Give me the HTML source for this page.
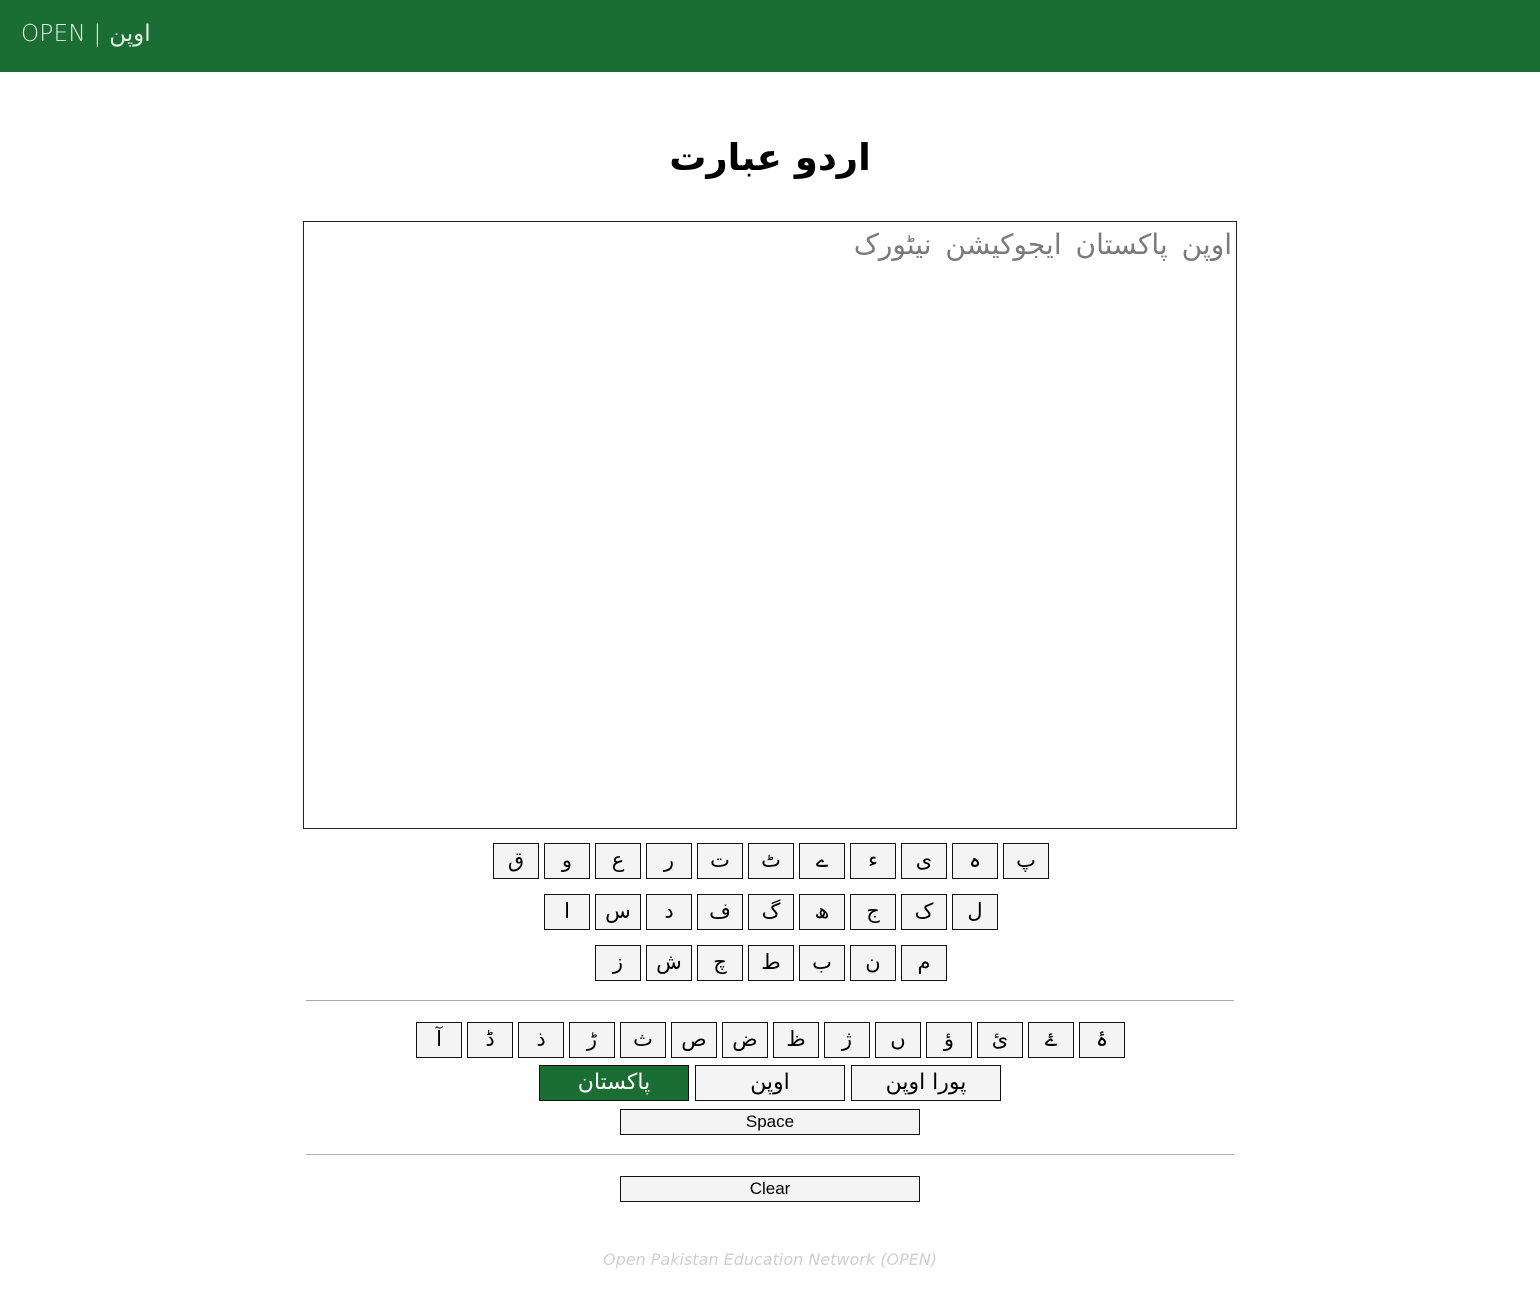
<!DOCTYPE html>
<html><head><meta charset="utf-8">
<style>
*{box-sizing:border-box;margin:0;padding:0}
body{width:1540px;height:1293px;background:#fff;font-family:"Liberation Sans","DejaVu Sans",sans-serif;position:relative;overflow:hidden}
.nav{position:absolute;left:0;top:0;width:1540px;height:72px;background:#1b6e33}
.brand{position:absolute;left:21px;top:21px;color:#e8efe8;font-size:23px;font-family:"DejaVu Sans","Liberation Sans",sans-serif;font-weight:300;letter-spacing:0.3px}
h1{position:absolute;left:0;width:1540px;top:136px;text-align:center;font-size:37px;font-weight:bold;font-family:"DejaVu Sans","Liberation Sans",sans-serif}
.ta{position:absolute;left:303px;top:221px;width:934px;height:608px;border:1px solid #222}
.ph{position:absolute;right:4px;top:6px;direction:rtl;color:#7a7a7a;font-size:28px;font-family:"DejaVu Sans",sans-serif;word-spacing:5px}
.k{position:absolute;width:46px;height:36px;background:#f4f4f4;border:1px solid #111;text-align:center;font-size:21px;line-height:33px;font-family:"DejaVu Sans",sans-serif}
.b{position:absolute;height:36px;width:150px;background:#f4f4f4;border:1px solid #111;text-align:center;font-size:22px;line-height:34px;font-family:"DejaVu Sans",sans-serif}
.w{position:absolute;left:620px;width:300px;height:26px;background:#f4f4f4;border:1px solid #111;text-align:center;font-size:17px;line-height:23px}
.hr{position:absolute;left:306px;width:928px;height:1px;background:#aaa}
.foot{position:absolute;left:0;width:1540px;top:1250px;text-align:center;color:#cfcfcf;font-style:italic;font-size:16px;font-family:"DejaVu Sans",sans-serif;font-weight:300}
</style></head><body>
<div class="nav"><div class="brand">OPEN | اوپن</div></div>
<h1>اردو عبارت</h1>
<div class="ta"><div class="ph">اوپن پاکستان ایجوکیشن نیٹورک</div></div>
<div class="k" style="left:493px;top:843px">ق</div><div class="k" style="left:544px;top:843px">و</div><div class="k" style="left:595px;top:843px">ع</div><div class="k" style="left:646px;top:843px">ر</div><div class="k" style="left:697px;top:843px">ت</div><div class="k" style="left:748px;top:843px">ٹ</div><div class="k" style="left:799px;top:843px">ے</div><div class="k" style="left:850px;top:843px">ء</div><div class="k" style="left:901px;top:843px">ی</div><div class="k" style="left:952px;top:843px">ہ</div><div class="k" style="left:1003px;top:843px">پ</div>
<div class="k" style="left:544px;top:894px">ا</div><div class="k" style="left:595px;top:894px">س</div><div class="k" style="left:646px;top:894px">د</div><div class="k" style="left:697px;top:894px">ف</div><div class="k" style="left:748px;top:894px">گ</div><div class="k" style="left:799px;top:894px">ھ</div><div class="k" style="left:850px;top:894px">ج</div><div class="k" style="left:901px;top:894px">ک</div><div class="k" style="left:952px;top:894px">ل</div>
<div class="k" style="left:595px;top:945px">ز</div><div class="k" style="left:646px;top:945px">ش</div><div class="k" style="left:697px;top:945px">چ</div><div class="k" style="left:748px;top:945px">ط</div><div class="k" style="left:799px;top:945px">ب</div><div class="k" style="left:850px;top:945px">ن</div><div class="k" style="left:901px;top:945px">م</div>
<div class="hr" style="top:1000px"></div>
<div class="k" style="left:416px;top:1022px">آ</div><div class="k" style="left:467px;top:1022px">ڈ</div><div class="k" style="left:518px;top:1022px">ذ</div><div class="k" style="left:569px;top:1022px">ڑ</div><div class="k" style="left:620px;top:1022px">ث</div><div class="k" style="left:671px;top:1022px">ص</div><div class="k" style="left:722px;top:1022px">ض</div><div class="k" style="left:773px;top:1022px">ظ</div><div class="k" style="left:824px;top:1022px">ژ</div><div class="k" style="left:875px;top:1022px">ں</div><div class="k" style="left:926px;top:1022px">ؤ</div><div class="k" style="left:977px;top:1022px">ئ</div><div class="k" style="left:1028px;top:1022px">ۓ</div><div class="k" style="left:1079px;top:1022px">ۂ</div>
<div class="b" style="left:539px;top:1065px;background:#1b6e33;color:#fff">پاکستان</div>
<div class="b" style="left:695px;top:1065px">اوپن</div>
<div class="b" style="left:851px;top:1065px">پورا اوپن</div>
<div class="w" style="top:1109px">Space</div>
<div class="hr" style="top:1154px"></div>
<div class="w" style="top:1176px">Clear</div>
<div class="foot">Open Pakistan Education Network (OPEN)</div>
</body></html>
